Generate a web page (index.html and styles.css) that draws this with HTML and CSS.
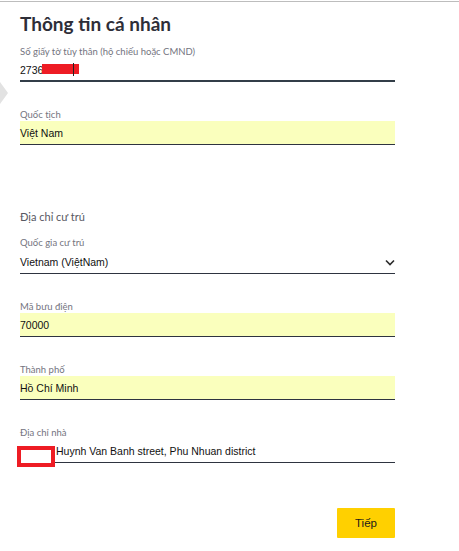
FILE: index.html
```html
<!DOCTYPE html>
<html lang="vi">
<head>
<meta charset="utf-8">
<title>Thông tin cá nhân</title>
<link rel="stylesheet" href="styles.css">
</head>
<body>
<div class="topline"></div>
<div class="notch"></div>
<main class="form">
  <h1 class="title">Thông tin cá nhân</h1>

  <div class="field focused">
    <label class="label">Số giấy tờ tùy thân (hộ chiếu hoặc CMND)</label>
    <div class="input"><span class="val">2736</span><span class="redact"></span><span class="caret"></span></div>
  </div>

  <div class="field">
    <label class="label">Quốc tịch</label>
    <div class="input filled"><span class="val">Việt Nam</span></div>
  </div>

  <h2 class="section">Địa chỉ cư trú</h2>

  <div class="field first">
    <label class="label">Quốc gia cư trú</label>
    <div class="input select"><span class="val">Vietnam (ViệtNam)</span>
      <svg class="chev" width="10" height="7" viewBox="0 0 10 7"><path d="M1 1.5 L5 5.5 L9 1.5" fill="none" stroke="#2b2b2b" stroke-width="1.6"/></svg>
    </div>
  </div>

  <div class="field">
    <label class="label">Mã bưu điện</label>
    <div class="input filled"><span class="val">70000</span></div>
  </div>

  <div class="field">
    <label class="label">Thành phố</label>
    <div class="input filled"><span class="val">Hồ Chí Minh</span></div>
  </div>

  <div class="field">
    <label class="label">Địa chỉ nhà</label>
    <div class="input addr"><span class="redbox"></span><span class="val">Huynh Van Banh street, Phu Nhuan district</span></div>
  </div>

  <div class="actions">
    <button class="btn">Tiếp</button>
  </div>
</main>
</body>
</html>
```

FILE: styles.css
```css
html, body {
  margin: 0;
  padding: 0;
  background: #ffffff;
}
body {
  padding-top: 1px;
  position: relative;
  width: 459px;
  height: 550px;
  overflow: hidden;
}
.topline {
  height: 1px;
  background: #bdbdbd;
}
.notch {
  position: absolute;
  left: 0;
  top: 82px;
  width: 0;
  height: 0;
  border-top: 11px solid transparent;
  border-bottom: 11px solid transparent;
  border-left: 8px solid #e2e2e2;
}
.form {
  width: 375px;
  padding-left: 20px;
  display: flex;
  flex-direction: column;
}
.title {
  margin: 8px 0 0 0;
  font-family: Lato, "Open Sans", sans-serif;
  font-weight: 700;
  font-size: 19px;
  line-height: 28px;
  color: #2e2e38;
}
.field {
  margin-top: 26px;
  display: flex;
  flex-direction: column;
}
.field.focused {
  margin-top: 7px;
}
.field.first {
  margin-top: 10px;
}
.label {
  font-family: Lato, "Open Sans", sans-serif;
  font-size: 9.5px;
  line-height: 13px;
  height: 13px;
  color: #747480;
}
.input {
  position: relative;
  height: 23px;
  border-bottom: 1px solid #2e3440;
  display: flex;
  align-items: center;
  font-family: "Liberation Sans", Arial, sans-serif;
  font-size: 10.5px;
  color: #111111;
}
.input .val {
  line-height: 14px;
  padding-top: 1px;
}
.field.focused .input {
  height: 22px;
  border-bottom: 2px solid #333e48;
}
.filled {
  background: #faffbd;
}
.select {
  height: 24px;
  justify-content: space-between;
}
.chev {
  margin-right: 0;
  margin-top: 3px;
}
.redact {
  display: inline-block;
  width: 37px;
  height: 10px;
  margin-left: -1px;
  background: #ee1c24;
}
.caret {
  position: absolute;
  left: 53px;
  top: 5px;
  width: 1px;
  height: 13px;
  background: #222;
}
.addr {
  padding-left: 36px;
}
.redbox {
  position: absolute;
  left: -3px;
  top: 7px;
  width: 30px;
  height: 13px;
  border: 4px solid #ee1c24;
  background: #ffffff;
}
.section {
  margin: 63px 0 0 0;
  font-family: Lato, "Open Sans", sans-serif;
  font-weight: 400;
  font-size: 11px;
  line-height: 18px;
  color: #585862;
}
.actions {
  margin-top: 45px;
  display: flex;
  justify-content: flex-end;
}
.btn {
  width: 58px;
  height: 30px;
  border: none;
  border-radius: 1px;
  background: #ffd000;
  font-family: "Liberation Sans", Arial, sans-serif;
  font-size: 11.5px;
  color: #1a1a1a;
  padding: 0;
}
```
